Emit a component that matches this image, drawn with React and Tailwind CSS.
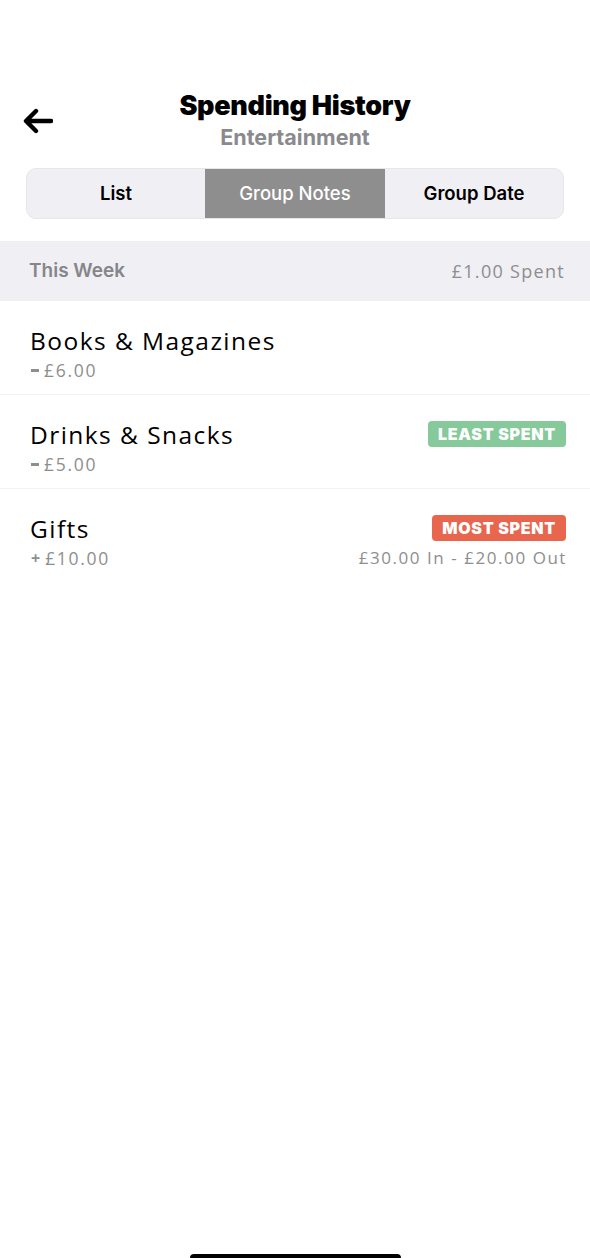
import React from "react";

const rowFont = { fontFamily: '"Open Sans", "Liberation Sans", sans-serif' };

function Amount({ sign, value }) {
  return (
    <span className="flex items-center text-[17.5px] leading-[22px] tracking-[1.7px] text-[#8e8e8e]" style={rowFont}>
      {sign === "-" ? (
        <span className="ml-[1px] mr-[5px] mt-[1px] inline-block h-[2.5px] w-[8px] bg-[#8e8e8e]" />
      ) : (
        <span className="ml-[1px] mr-[5px] text-[16px] font-bold tracking-normal">+</span>
      )}
      {value}
    </span>
  );
}

function Row({ title, sign, value, badge, right, last }) {
  return (
    <div className={`h-[94px] pl-[30px] pr-[24px] pt-[25px] ${last ? "" : "border-b border-[#f2f2f4]"}`}>
      <div className="flex h-[30px] items-center justify-between">
        <span className="text-[24.5px] leading-[30px] tracking-[1.45px] text-black" style={rowFont}>{title}</span>
        {badge}
      </div>
      <div className="mt-[3px] flex h-[22px] items-center justify-between">
        <Amount sign={sign} value={value} />
        {right && (
          <span className="mr-[-1px] text-[17px] leading-[22px] tracking-[1.55px] text-[#8e8e8e]" style={rowFont}>{right}</span>
        )}
      </div>
    </div>
  );
}

function Badge({ color, children }) {
  return (
    <span
      className={`mt-[-3px] flex h-[26px] items-center rounded-[4px] px-[10px] text-[16px] font-black tracking-[0.7px] text-white ${color}`}
      style={{ fontFamily: 'Inter, "Liberation Sans", sans-serif' }}
    >
      {children}
    </span>
  );
}

export default function App() {
  return (
    <div className="relative min-h-[1258px] w-[590px] bg-white" style={{ fontFamily: 'Inter, "Liberation Sans", sans-serif' }}>
      <div className="relative flex flex-col items-center pt-[90px]">
        <button className="absolute left-[23px] top-[108px] text-black">
          <svg width="30" height="26" viewBox="0 0 30 26" fill="none">
            <path d="M28 13H4M13 3L3 13l10 10" stroke="black" strokeWidth="4.4" strokeLinecap="round" strokeLinejoin="round" />
          </svg>
        </button>
        <h1 className="text-[27px] font-black leading-[32px] tracking-[-0.3px] text-black">Spending History</h1>
        <p className="mt-[2px] text-[21.5px] font-bold leading-[26px] text-[#8a8a8e]">Entertainment</p>
        <div className="mt-[18px] flex h-[51px] w-[538px] overflow-hidden rounded-[10px] border border-[#e6e6ea] bg-[#f0f0f4]">
          <div className="flex flex-1 items-center justify-center text-[18.5px] font-semibold text-black">List</div>
          <div className="flex w-[180px] items-center justify-center bg-[#8e8e8e] text-[18.5px] font-medium text-white">Group Notes</div>
          <div className="flex flex-1 items-center justify-center text-[18.5px] font-semibold text-black">Group Date</div>
        </div>
      </div>
      <div className="mt-[22px] flex h-[60px] items-center justify-between bg-[#efeff4] pl-[29px] pr-[25px]">
        <span className="text-[19px] font-semibold text-[#86868a]">This Week</span>
        <span className="text-[18px] tracking-[1.3px] text-[#8e8e8e]" style={rowFont}>£1.00 Spent</span>
      </div>
      <Row title="Books & Magazines" sign="-" value="£6.00" />
      <Row
        title="Drinks & Snacks"
        sign="-"
        value="£5.00"
        badge={<Badge color="bg-[#86c99a]">LEAST SPENT</Badge>}
      />
      <Row
        title="Gifts"
        sign="+"
        value="£10.00"
        badge={<Badge color="bg-[#e8654e]">MOST SPENT</Badge>}
        right="£30.00 In - £20.00 Out"
        last
      />
      <div className="absolute bottom-0 left-[190px] h-[4px] w-[211px] rounded-t-full bg-black" />
    </div>
  );
}
